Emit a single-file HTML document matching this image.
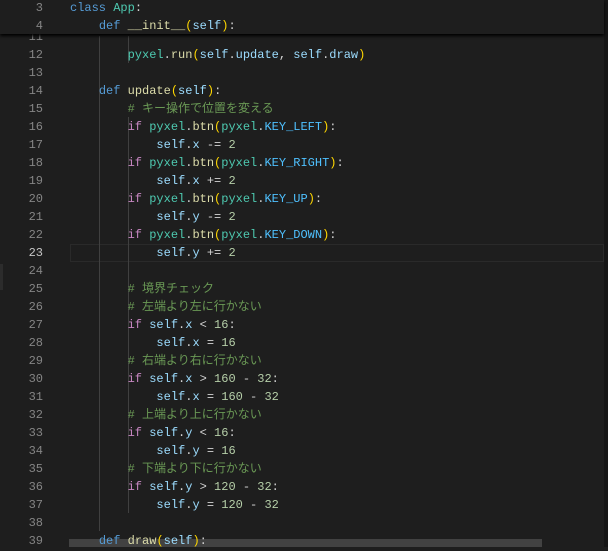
<!DOCTYPE html>
<html><head><meta charset="utf-8"><style>
body{margin:0;width:608px;height:547px;background:#1e1e1e;overflow:hidden;position:relative;font-family:"Liberation Mono","Noto Sans CJK JP",monospace;font-size:12px;}
.l{position:absolute;left:0;height:18px;line-height:20px;width:604px;white-space:pre;color:#d4d4d4}
.n{position:absolute;left:0;width:43px;text-align:right;color:#858585}
.c{position:absolute;left:70px}
.k{color:#569cd6}.t{color:#4ec9b0}.f{color:#dcdcaa}.p{color:#ffd700}.s{color:#9cdcfe}.i{color:#c586c0}.m{color:#b5cea8}.cm{color:#6a9955}.K{color:#4fc1ff}
.g{position:absolute;width:1px;background:#404040}
#hdr{position:absolute;left:0;top:0;width:604px;height:34px;background:#1e1e1e;box-shadow:0 2px 3px #000;z-index:5;overflow:hidden}
</style></head><body>
<div style="position:absolute;right:0;top:0;width:4px;height:547px;background:#161616"></div>
<div style="position:absolute;left:0;top:264px;width:3px;height:26px;background:#2c2c2c"></div>
<div style="position:absolute;left:70px;top:244px;width:532px;height:16px;border:1px solid #2a2a2a"></div>
<div class="g" style="left:99px;top:36px;height:495px"></div>
<div class="g" style="left:128px;top:117px;height:396px"></div>
<div class="g" style="left:128px;top:36px;height:27px"></div>
<div id="hdr">
<div class="l" style="top:-2px"><span class="n">3</span><span class="c"><span class="k">class</span> <span class="t">App</span>:</span></div>
<div class="l" style="top:16px"><span class="n">4</span><span class="c">    <span class="k">def</span> <span class="f">__init__</span><span class="p">(</span><span class="s">self</span><span class="p">)</span>:</span></div>
</div>
<div class="l" style="top:27px"><span class="n">11</span></div>
<div class="l" style="top:45px"><span class="n">12</span><span class="c">        <span class="t">pyxel</span>.<span class="f">run</span><span class="p">(</span><span class="s">self</span>.<span class="s">update</span>, <span class="s">self</span>.<span class="s">draw</span><span class="p">)</span></span></div>
<div class="l" style="top:63px"><span class="n">13</span></div>
<div class="l" style="top:81px"><span class="n">14</span><span class="c">    <span class="k">def</span> <span class="f">update</span><span class="p">(</span><span class="s">self</span><span class="p">)</span>:</span></div>
<div class="l" style="top:99px"><span class="n">15</span><span class="c">        <span class="cm"># キー操作で位置を変える</span></span></div>
<div class="l" style="top:117px"><span class="n">16</span><span class="c">        <span class="i">if</span> <span class="t">pyxel</span>.<span class="f">btn</span><span class="p">(</span><span class="t">pyxel</span>.<span class="K">KEY_LEFT</span><span class="p">)</span>:</span></div>
<div class="l" style="top:135px"><span class="n">17</span><span class="c">            <span class="s">self</span>.<span class="s">x</span> -= <span class="m">2</span></span></div>
<div class="l" style="top:153px"><span class="n">18</span><span class="c">        <span class="i">if</span> <span class="t">pyxel</span>.<span class="f">btn</span><span class="p">(</span><span class="t">pyxel</span>.<span class="K">KEY_RIGHT</span><span class="p">)</span>:</span></div>
<div class="l" style="top:171px"><span class="n">19</span><span class="c">            <span class="s">self</span>.<span class="s">x</span> += <span class="m">2</span></span></div>
<div class="l" style="top:189px"><span class="n">20</span><span class="c">        <span class="i">if</span> <span class="t">pyxel</span>.<span class="f">btn</span><span class="p">(</span><span class="t">pyxel</span>.<span class="K">KEY_UP</span><span class="p">)</span>:</span></div>
<div class="l" style="top:207px"><span class="n">21</span><span class="c">            <span class="s">self</span>.<span class="s">y</span> -= <span class="m">2</span></span></div>
<div class="l" style="top:225px"><span class="n">22</span><span class="c">        <span class="i">if</span> <span class="t">pyxel</span>.<span class="f">btn</span><span class="p">(</span><span class="t">pyxel</span>.<span class="K">KEY_DOWN</span><span class="p">)</span>:</span></div>
<div class="l" style="top:243px"><span class="n" style="color:#c6c6c6">23</span><span class="c">            <span class="s">self</span>.<span class="s">y</span> += <span class="m">2</span></span></div>
<div class="l" style="top:261px"><span class="n">24</span></div>
<div class="l" style="top:279px"><span class="n">25</span><span class="c">        <span class="cm"># 境界チェック</span></span></div>
<div class="l" style="top:297px"><span class="n">26</span><span class="c">        <span class="cm"># 左端より左に行かない</span></span></div>
<div class="l" style="top:315px"><span class="n">27</span><span class="c">        <span class="i">if</span> <span class="s">self</span>.<span class="s">x</span> &lt; <span class="m">16</span>:</span></div>
<div class="l" style="top:333px"><span class="n">28</span><span class="c">            <span class="s">self</span>.<span class="s">x</span> = <span class="m">16</span></span></div>
<div class="l" style="top:351px"><span class="n">29</span><span class="c">        <span class="cm"># 右端より右に行かない</span></span></div>
<div class="l" style="top:369px"><span class="n">30</span><span class="c">        <span class="i">if</span> <span class="s">self</span>.<span class="s">x</span> &gt; <span class="m">160</span> - <span class="m">32</span>:</span></div>
<div class="l" style="top:387px"><span class="n">31</span><span class="c">            <span class="s">self</span>.<span class="s">x</span> = <span class="m">160</span> - <span class="m">32</span></span></div>
<div class="l" style="top:405px"><span class="n">32</span><span class="c">        <span class="cm"># 上端より上に行かない</span></span></div>
<div class="l" style="top:423px"><span class="n">33</span><span class="c">        <span class="i">if</span> <span class="s">self</span>.<span class="s">y</span> &lt; <span class="m">16</span>:</span></div>
<div class="l" style="top:441px"><span class="n">34</span><span class="c">            <span class="s">self</span>.<span class="s">y</span> = <span class="m">16</span></span></div>
<div class="l" style="top:459px"><span class="n">35</span><span class="c">        <span class="cm"># 下端より下に行かない</span></span></div>
<div class="l" style="top:477px"><span class="n">36</span><span class="c">        <span class="i">if</span> <span class="s">self</span>.<span class="s">y</span> &gt; <span class="m">120</span> - <span class="m">32</span>:</span></div>
<div class="l" style="top:495px"><span class="n">37</span><span class="c">            <span class="s">self</span>.<span class="s">y</span> = <span class="m">120</span> - <span class="m">32</span></span></div>
<div class="l" style="top:513px"><span class="n">38</span></div>
<div style="position:absolute;left:69px;top:539px;width:473px;height:8px;background:#424242"></div>
<div class="l" style="top:531px"><span class="n">39</span><span class="c">    <span class="k">def</span> <span class="f">draw</span><span class="p">(</span><span class="s">self</span><span class="p">)</span>:</span></div>
</body></html>
